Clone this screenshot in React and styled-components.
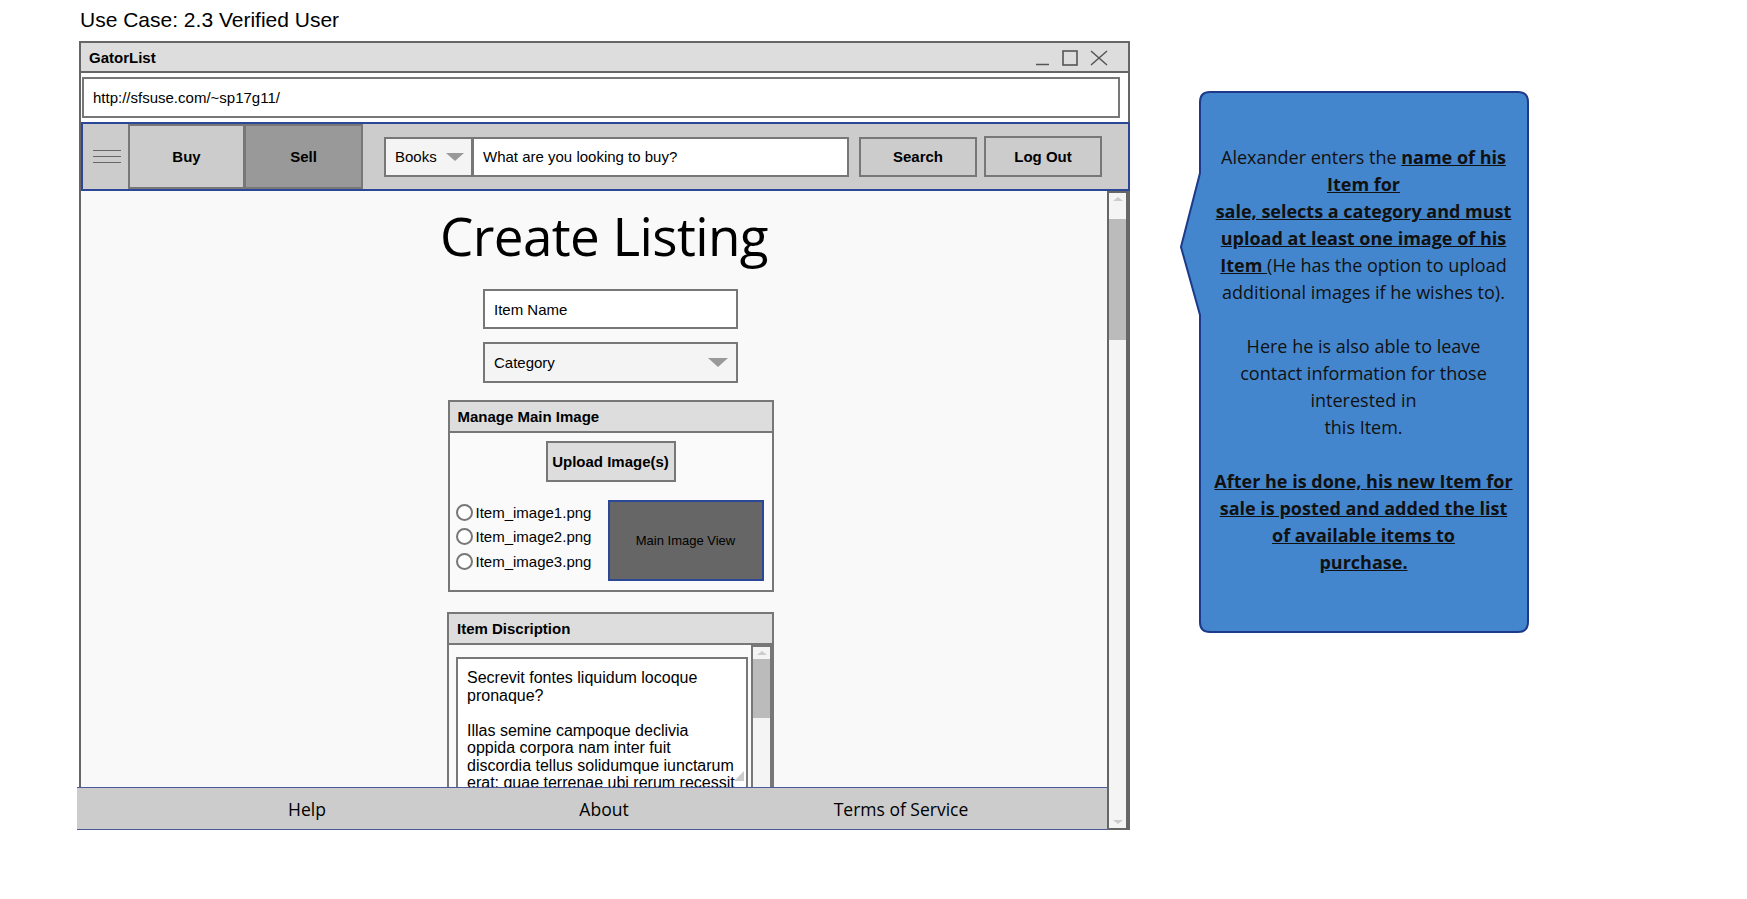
import React from "react";
import styled, { createGlobalStyle } from "styled-components";

const GlobalStyle = createGlobalStyle`
  body {
    margin: 0;
    background: #ffffff;
    font-family: "Liberation Sans", Arial, sans-serif;
    color: #000;
  }
`;

const Page = styled.div`
  display: flex;
  align-items: flex-start;
  width: 1747px;
  height: 899px;
  overflow: hidden;
`;

const LeftColumn = styled.div`
  display: flex;
  flex-direction: column;
  padding-left: 79px;
`;

const UseCaseTitle = styled.div`
  height: 41px;
  box-sizing: border-box;
  padding: 8px 0 0 1px;
  font-size: 21px;
  line-height: 24px;
`;

const Window = styled.div`
  width: 1051px;
  height: 789px;
  box-sizing: border-box;
  border: 2px solid #666;
  background: #fff;
  display: flex;
  flex-direction: column;
`;

const TitleBar = styled.div`
  height: 28px;
  flex: none;
  background: #ddd;
  border-bottom: 2px solid #666;
  display: flex;
  align-items: center;
  justify-content: space-between;
  padding: 0 20px 0 8px;
  font-size: 15px;
  font-weight: bold;
`;

const WindowControls = styled.div`
  display: flex;
  align-items: center;
  gap: 12px;
  color: #555;
  padding-top: 2px;
`;

const UrlRow = styled.div`
  flex: none;
  padding: 4px 8px 4px 1px;
`;

const UrlBox = styled.div`
  height: 41px;
  box-sizing: border-box;
  border: 2px solid #777;
  background: #fff;
  display: flex;
  align-items: center;
  padding-left: 9px;
  font-size: 15px;
`;

const NavBar = styled.div`
  flex: none;
  height: 69px;
  box-sizing: border-box;
  margin-right: -2px;
  border: 2px solid #2c4796;
  background: #ccc;
  display: flex;
  align-items: stretch;
`;

const Burger = styled.div`
  flex: none;
  width: 45px;
  display: flex;
  flex-direction: column;
  justify-content: center;
  align-items: center;
  gap: 5px;
  padding-left: 3px;
  box-sizing: border-box;
`;

const BurgerLine = styled.span`
  display: block;
  width: 28px;
  height: 1px;
  background: #666;
`;

const NavTab = styled.div`
  flex: none;
  width: ${props => props.w}px;
  box-sizing: border-box;
  border: 2px solid #777;
  margin-left: ${props => (props.join ? "-1px" : "0")};
  background: ${props => (props.active ? "#999" : "#ccc")};
  display: flex;
  align-items: center;
  justify-content: center;
  font-size: 15px;
  font-weight: bold;
`;

const SearchGroup = styled.div`
  flex: none;
  align-self: center;
  display: flex;
  height: 40px;
  margin-left: 21px;
`;

const CategoryPick = styled.div`
  width: 89px;
  box-sizing: border-box;
  border: 2px solid #777;
  background: #f4f4f4;
  display: flex;
  align-items: center;
  justify-content: space-between;
  padding: 0 7px 0 9px;
  font-size: 15px;
`;

const Arrow = styled.span`
  width: 0;
  height: 0;
  border-left: ${props => props.size}px solid transparent;
  border-right: ${props => props.size}px solid transparent;
  border-top: ${props => props.size - 1}px solid #999;
`;

const SearchInput = styled.div`
  width: 377px;
  margin-left: -1px;
  box-sizing: border-box;
  border: 2px solid #777;
  background: #fff;
  display: flex;
  align-items: center;
  padding-left: 9px;
  font-size: 15px;
`;

const NavButton = styled.div`
  flex: none;
  align-self: center;
  width: 118px;
  height: ${props => (props.tall ? 41 : 40)}px;
  margin-top: ${props => (props.tall ? -1 : 0)}px;
  margin-left: ${props => props.gap}px;
  box-sizing: border-box;
  border: 2px solid #777;
  background: #ccc;
  display: flex;
  align-items: center;
  justify-content: center;
  font-size: 15px;
  font-weight: bold;
`;

const Body = styled.div`
  flex: 1;
  min-height: 0;
  display: flex;
  margin-bottom: -2px;
`;

const Main = styled.div`
  width: 1028px;
  display: flex;
  flex-direction: column;
`;

const ScrollArea = styled.div`
  flex: 1;
  min-height: 0;
  overflow: hidden;
  background: #f9f9f9;
  display: flex;
  flex-direction: column;
  align-items: center;
  padding-left: 33px;
`;

const Footer = styled.div`
  flex: none;
  height: 43px;
  box-sizing: border-box;
  margin-left: -4px;
  border-top: 1px solid #4a5a9a;
  border-bottom: 1px solid #4a5a9a;
  background: #ccc;
  display: grid;
  grid-template-columns: repeat(3, 297px);
  justify-content: center;
  align-items: center;
  padding-left: 24px;
  font-family: "Open Sans", "Noto Sans", sans-serif;
  font-size: 17.5px;
  text-align: center;
`;

const Scrollbar = styled.div`
  flex: none;
  width: ${props => props.width}px;
  box-sizing: border-box;
  border: 2px solid ${props => props.line};
  background: #f4f4f4;
  display: flex;
  flex-direction: column;
  align-items: center;
`;

const ScrollArrow = styled.span`
  flex: none;
  margin: ${props => (props.down ? "auto 0 4px" : "4px 0 0")};
  width: 0;
  height: 0;
  border-left: 5px solid transparent;
  border-right: 5px solid transparent;
  ${props =>
    props.down
      ? "border-top: 4px solid #ccc;"
      : "border-bottom: 4px solid #ccc;"}
`;

const ScrollThumb = styled.div`
  flex: none;
  align-self: stretch;
  height: ${props => props.size}px;
  margin-top: ${props => props.offset}px;
  background: #bbb;
`;

const PageHeading = styled.h1`
  flex: none;
  margin: 15px 0 0 -13px;
  font-family: "Open Sans", "Noto Sans", sans-serif;
  font-weight: 400;
  font-size: 53px;
  line-height: 60px;
  letter-spacing: -0.6px;
`;

const Field = styled.div`
  flex: none;
  width: 255px;
  height: ${props => props.h}px;
  margin-top: ${props => props.top}px;
  box-sizing: border-box;
  border: 2px solid #777;
  background: ${props => (props.shade ? "#f4f4f4" : "#fff")};
  display: flex;
  align-items: center;
  justify-content: space-between;
  padding: 0 8px 0 9px;
  font-size: 15px;
`;

const Panel = styled.div`
  flex: none;
  width: ${props => props.w}px;
  margin-top: ${props => props.top}px;
  box-sizing: border-box;
  border: 2px solid #777;
  background: #fafafa;
`;

const PanelHeader = styled.div`
  height: 29px;
  border-bottom: 2px solid #777;
  background: #ddd;
  display: flex;
  align-items: center;
  padding-left: 8px;
  font-size: 15px;
  font-weight: bold;
`;

const ImageBody = styled.div`
  display: flex;
  flex-direction: column;
  align-items: center;
  padding: 8px 8px 9px 6px;
`;

const UploadButton = styled.div`
  width: 130px;
  height: 41px;
  box-sizing: border-box;
  border: 2px solid #777;
  background: #ddd;
  display: flex;
  align-items: center;
  justify-content: center;
  font-size: 15px;
  font-weight: bold;
  margin-left: 2px;
`;

const ImageRow = styled.div`
  align-self: stretch;
  display: flex;
  justify-content: space-between;
  margin-top: 18px;
`;

const RadioList = styled.div`
  display: flex;
  flex-direction: column;
`;

const RadioRow = styled.label`
  display: flex;
  align-items: center;
  gap: 3px;
  height: 24.5px;
  font-size: 15px;
`;

const RadioDot = styled.span`
  width: 17px;
  height: 17px;
  box-sizing: border-box;
  border: 2px solid #777;
  border-radius: 50%;
  background: #fff;
`;

const ImageView = styled.div`
  width: 156px;
  height: 81px;
  box-sizing: border-box;
  border: 2px solid #2c4796;
  background: #666;
  display: flex;
  align-items: center;
  justify-content: center;
  font-size: 13px;
`;

const DescBody = styled.div`
  display: flex;
  height: 160px;
`;

const DescTextWrap = styled.div`
  flex: 1;
  padding: 12px 3px 0 7px;
`;

const DescText = styled.div`
  position: relative;
  height: 140px;
  box-sizing: border-box;
  border: 2px solid #777;
  background: #fff;
  padding: 10px 9px;
  font-size: 16px;
  line-height: 17.5px;
  overflow: hidden;
`;

const ResizeGrip = styled.span`
  position: absolute;
  right: 2px;
  top: 112px;
  width: 0;
  height: 0;
  border-left: 10px solid transparent;
  border-bottom: 10px solid #ccc;
`;

const Callout = styled.div`
  position: relative;
  width: 349px;
  height: 542px;
  margin: 91px 0 0 50px;
  box-sizing: border-box;
  padding: 53px 8px 0 26px;
  font-family: "Open Sans", "Noto Sans", sans-serif;
  font-size: 18px;
  line-height: 27px;
  text-align: center;
  color: #111;
`;

const CalloutShape = styled.svg`
  position: absolute;
  inset: 0;
  z-index: 0;
`;

const CalloutText = styled.div`
  position: relative;
  z-index: 1;
  white-space: nowrap;
`;

const Strong = styled.span`
  font-weight: bold;
  text-decoration: underline;
`;

function WindowIcons() {
  return (
    <WindowControls>
      <svg width="15" height="16" viewBox="0 0 15 16">
        <line x1="1" y1="14.5" x2="14" y2="14.5" stroke="#555" strokeWidth="1.5" />
      </svg>
      <svg width="16" height="16" viewBox="0 0 16 16">
        <rect x="1" y="1" width="14" height="14" fill="none" stroke="#555" strokeWidth="1.6" />
      </svg>
      <svg width="18" height="16" viewBox="0 0 18 16">
        <path d="M1 1 L17 15 M17 1 L1 15" stroke="#555" strokeWidth="1.5" fill="none" />
      </svg>
    </WindowControls>
  );
}

export default function App() {
  return (
    <Page>
      <GlobalStyle />
      <LeftColumn>
        <UseCaseTitle>Use Case: 2.3 Verified User</UseCaseTitle>
        <Window>
          <TitleBar>
            <span>GatorList</span>
            <WindowIcons />
          </TitleBar>
          <UrlRow>
            <UrlBox>http://sfsuse.com/~sp17g11/</UrlBox>
          </UrlRow>
          <NavBar>
            <Burger>
              <BurgerLine />
              <BurgerLine />
              <BurgerLine />
            </Burger>
            <NavTab w={117}>Buy</NavTab>
            <NavTab w={119} active join>
              Sell
            </NavTab>
            <SearchGroup>
              <CategoryPick>
                Books <Arrow size={9} />
              </CategoryPick>
              <SearchInput>What are you looking to buy?</SearchInput>
            </SearchGroup>
            <NavButton gap={10}>Search</NavButton>
            <NavButton gap={7} tall>
              Log Out
            </NavButton>
          </NavBar>
          <Body>
            <Main>
              <ScrollArea>
                <PageHeading>Create Listing</PageHeading>
                <Field h={40} top={23}>
                  Item Name
                </Field>
                <Field h={41} top={13} shade>
                  Category <Arrow size={10} />
                </Field>
                <Panel w={326} top={17}>
                  <PanelHeader>Manage Main Image</PanelHeader>
                  <ImageBody>
                    <UploadButton>Upload Image(s)</UploadButton>
                    <ImageRow>
                      <RadioList>
                        <RadioRow>
                          <RadioDot />
                          Item_image1.png
                        </RadioRow>
                        <RadioRow>
                          <RadioDot />
                          Item_image2.png
                        </RadioRow>
                        <RadioRow>
                          <RadioDot />
                          Item_image3.png
                        </RadioRow>
                      </RadioList>
                      <ImageView>Main Image View</ImageView>
                    </ImageRow>
                  </ImageBody>
                </Panel>
                <Panel w={327} top={20}>
                  <PanelHeader>Item Discription</PanelHeader>
                  <DescBody>
                    <DescTextWrap>
                      <DescText>
                        Secrevit fontes liquidum locoque
                        <br />
                        pronaque?
                        <br />
                        <br />
                        Illas semine campoque declivia
                        <br />
                        oppida corpora nam inter fuit
                        <br />
                        discordia tellus solidumque iunctarum
                        <br />
                        erat: quae terrenae ubi rerum recessit
                        <br />
                        <ResizeGrip />
                      </DescText>
                    </DescTextWrap>
                    <Scrollbar width={21} line="#777">
                      <ScrollArrow />
                      <ScrollThumb size={59} offset={4} />
                    </Scrollbar>
                  </DescBody>
                </Panel>
              </ScrollArea>
              <Footer>
                <span>Help</span>
                <span>About</span>
                <span>Terms of Service</span>
              </Footer>
            </Main>
            <Scrollbar width={21} line="#666">
              <ScrollArrow />
              <ScrollThumb size={121} offset={18} />
              <ScrollArrow down />
            </Scrollbar>
          </Body>
        </Window>
      </LeftColumn>
      <Callout>
        <CalloutShape width="349" height="542" viewBox="0 0 349 542">
          <path
            d="M30 1 H338 Q348 1 348 11 V531 Q348 541 338 541 H30 Q20 541 20 531 V224 L1 156 L20 82 V11 Q20 1 30 1 Z"
            fill="#4486cd"
            stroke="#1d3a8a"
            strokeWidth="2"
          />
        </CalloutShape>
        <CalloutText>
          Alexander enters the <Strong>name of his</Strong>
          <br />
          <Strong>Item for</Strong>
          <br />
          <Strong>sale, selects a category and must</Strong>
          <br />
          <Strong>upload at least one image of his</Strong>
          <br />
          <Strong>Item </Strong>(He has the option to upload
          <br />
          additional images if he wishes to).
          <br />
          <br />
          Here he is also able to leave
          <br />
          contact information for those
          <br />
          interested in
          <br />
          this Item.
          <br />
          <br />
          <Strong>After he is done, his new Item for</Strong>
          <br />
          <Strong>sale is posted and added the list</Strong>
          <br />
          <Strong>of available items to</Strong>
          <br />
          <Strong>purchase.</Strong>
        </CalloutText>
      </Callout>
    </Page>
  );
}
